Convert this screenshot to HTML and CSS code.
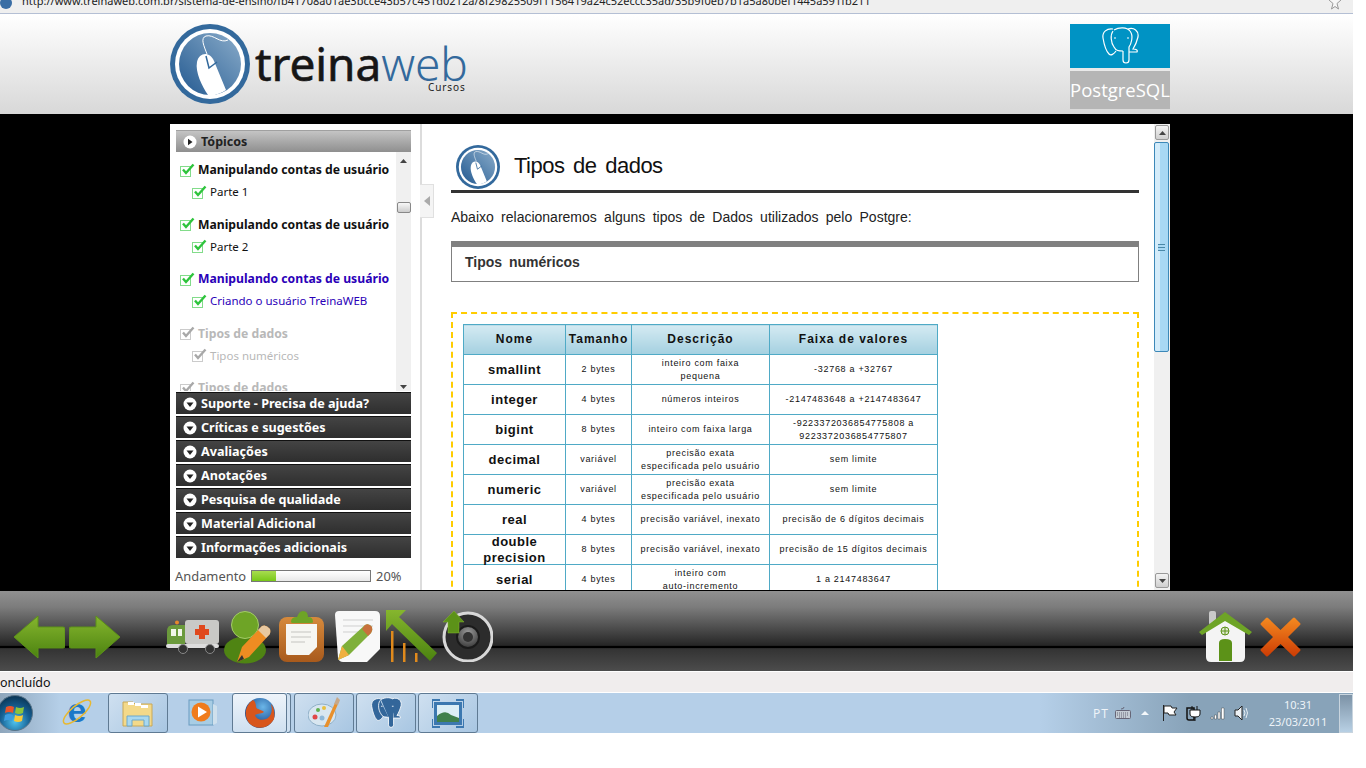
FILE: index.html
```html
<!DOCTYPE html>
<html lang="pt-BR">
<head>
    <meta charset="UTF-8">
    <title>TreinaWeb Cursos</title>
    <link rel="stylesheet" href="styles.css">
</head>
<body>
    <!-- shared icons -->
    <svg class="defs" width="0" height="0">
        <defs>
            <linearGradient id="discBlue" x1="0" y1="1" x2="1" y2="0">
                <stop offset="0" stop-color="#245a91"/>
                <stop offset="1" stop-color="#8aacca"/>
            </linearGradient>
            <linearGradient id="arrowGreen" x1="0" y1="0" x2="0" y2="1">
                <stop offset="0" stop-color="#86b62e"/>
                <stop offset="1" stop-color="#4b8210"/>
            </linearGradient>
            <linearGradient id="crossRed" x1="0" y1="0" x2="0" y2="1">
                <stop offset="0" stop-color="#f58a20"/>
                <stop offset="1" stop-color="#cc3c04"/>
            </linearGradient>
            <linearGradient id="boardBrown" x1="0" y1="0" x2="0" y2="1">
                <stop offset="0" stop-color="#d68a3c"/>
                <stop offset="1" stop-color="#a85a1c"/>
            </linearGradient>
            <radialGradient id="speakerCone" cx="0.5" cy="0.3" r="0.7">
                <stop offset="0" stop-color="#9a9a9a"/>
                <stop offset="1" stop-color="#3a3a3a"/>
            </radialGradient>
            <radialGradient id="orbBlue" cx="0.5" cy="0.75" r="0.7">
                <stop offset="0" stop-color="#4fc3ee"/>
                <stop offset="0.6" stop-color="#155f92"/>
                <stop offset="1" stop-color="#0c3a5c"/>
            </radialGradient>
            <radialGradient id="foxGlobe" cx="0.6" cy="0.3" r="0.6">
                <stop offset="0" stop-color="#6bb6e8"/>
                <stop offset="1" stop-color="#1c4f94"/>
            </radialGradient>
            <symbol id="logoMark" viewBox="0 0 80 80">
                <circle cx="40" cy="40" r="40" fill="#33699c"/>
                <circle cx="40" cy="40" r="35" fill="#fff"/>
                <circle cx="40" cy="40" r="31" fill="url(#discBlue)"/>
                <path d="M37 30C34 22 30 14 36 12C44 10 50 20 58 16" fill="none" stroke="#fff" stroke-width="1"/>
                <path d="M27 38C29 28 40 27 44 37L56 66C50 70 44 72 38 71C32 62 25 48 27 38Z" fill="#fff"/>
                <path d="M36 32L39 44L47 38" fill="none" stroke="#33699c" stroke-width="1.5"/>
            </symbol>
            <symbol id="pgElephant" viewBox="0 0 38 38">
                <path d="M12 2C6 1 1 5 2 11C3 17 5 24 8 27C10 29 13 27 15 24"/>
                <path d="M13 3C18 0 26 0 29 4C33 9 30 17 28 20L28 33C28 37 22 37 22 33L22 24"/>
                <path d="M27 2C33 0 38 4 37 10C36 14 34 19 32 22C35 22 37 23 36 25L28 25"/>
                <path d="M12 4C9 8 10 16 13 20C15 24 18 24 22 24"/>
                <path d="M13 11h2M26 11h2"/>
            </symbol>
            <symbol id="tick" viewBox="0 0 15 14">
                <rect x="0.5" y="3.5" width="10" height="10" fill="#fff" stroke="currentColor" stroke-opacity="0.6"/>
                <path d="M3 6.5L6 10L13.5 1.5" fill="none" stroke="currentColor" stroke-width="2.4"/>
            </symbol>
            <symbol id="openDown" viewBox="0 0 14 14">
                <circle cx="7" cy="7" r="6.5" fill="#fff"/>
                <path d="M3.5 5.5H10.5L7 10Z" fill="#222"/>
            </symbol>
        </defs>
    </svg>

    <div class="screen">
        <div class="urlbar">
            <svg class="url-globe" viewBox="0 0 14 14"><circle cx="6" cy="3" r="6" fill="#3a6ea5"/></svg>
            <span class="url-text">http://www.treinaweb.com.br/sistema-de-ensino/fb41708a01ae3bcce43b57c451d0212a/8f29825509f1156419a24c52eccc35ad/35b9f0eb7b1a5a80bef1445a591fb211</span>
            <svg class="url-star" viewBox="0 0 14 10"><path d="M1 0L5 3.5L3.5 9L7 6.5L10.5 9L9 3.5L13 0" fill="#f6f6f6" stroke="#999"/></svg>
        </div>

        <header class="site-head">
            <div class="brand">
                <svg class="brand-mark"><use href="#logoMark"/></svg>
                <div class="brand-name">
                    <div class="brand-word">treina<span class="brand-web">web</span></div>
                    <div class="brand-sub">Cursos</div>
                </div>
            </div>
            <div class="course-badge">
                <div class="course-logo">
                    <svg class="course-elephant"><use href="#pgElephant"/></svg>
                </div>
                <div class="course-name">PostgreSQL</div>
            </div>
        </header>

        <main class="stage">
            <div class="panel">
                <aside class="side">
                    <div class="topics-head">
                        <svg class="bullet" viewBox="0 0 14 14">
                            <circle cx="7" cy="7" r="6.5" fill="#fff"/>
                            <path d="M5 3.8L9.5 7L5 10.2Z" fill="#222"/>
                        </svg>
                        Tópicos
                    </div>
                    <div class="topics-wrap">
                        <div class="topics">
                            <div class="topic done">
                                <div class="topic-title"><svg class="tick"><use href="#tick"/></svg>Manipulando contas de usuário</div>
                                <div class="topic-part"><svg class="tick"><use href="#tick"/></svg>Parte 1</div>
                            </div>
                            <div class="topic done">
                                <div class="topic-title"><svg class="tick"><use href="#tick"/></svg>Manipulando contas de usuário</div>
                                <div class="topic-part"><svg class="tick"><use href="#tick"/></svg>Parte 2</div>
                            </div>
                            <div class="topic current">
                                <div class="topic-title"><svg class="tick"><use href="#tick"/></svg>Manipulando contas de usuário</div>
                                <div class="topic-part"><svg class="tick"><use href="#tick"/></svg>Criando o usuário TreinaWEB</div>
                            </div>
                            <div class="topic locked">
                                <div class="topic-title"><svg class="tick"><use href="#tick"/></svg>Tipos de dados</div>
                                <div class="topic-part"><svg class="tick"><use href="#tick"/></svg>Tipos numéricos</div>
                            </div>
                            <div class="topic locked">
                                <div class="topic-title"><svg class="tick"><use href="#tick"/></svg>Tipos de dados</div>
                            </div>
                        </div>
                        <div class="mini-scroll">
                            <svg class="mini-arrow" viewBox="0 0 9 5"><path d="M0 5L4.5 0L9 5Z" fill="#444"/></svg>
                            <div class="mini-thumb"></div>
                            <svg class="mini-arrow" viewBox="0 0 9 5"><path d="M0 0L4.5 5L9 0Z" fill="#444"/></svg>
                        </div>
                    </div>
                    <div class="acc"><svg class="bullet"><use href="#openDown"/></svg>Suporte - Precisa de ajuda?</div>
                    <div class="acc"><svg class="bullet"><use href="#openDown"/></svg>Críticas e sugestões</div>
                    <div class="acc"><svg class="bullet"><use href="#openDown"/></svg>Avaliações</div>
                    <div class="acc"><svg class="bullet"><use href="#openDown"/></svg>Anotações</div>
                    <div class="acc"><svg class="bullet"><use href="#openDown"/></svg>Pesquisa de qualidade</div>
                    <div class="acc"><svg class="bullet"><use href="#openDown"/></svg>Material Adicional</div>
                    <div class="acc"><svg class="bullet"><use href="#openDown"/></svg>Informações adicionais</div>
                    <div class="progress">
                        <span>Andamento</span>
                        <div class="progress-bar"><div class="progress-fill" style="width:20%"></div></div>
                        <span>20%</span>
                    </div>
                    <div class="collapse-tab">
                        <svg class="collapse-arrow" viewBox="0 0 6 10"><path d="M6 0V10L0 5Z" fill="#aaa"/></svg>
                    </div>
                </aside>

                <section class="lesson">
                    <div class="lesson-head">
                        <svg class="lesson-mark"><use href="#logoMark"/></svg>
                        <h1 class="lesson-title">Tipos de dados</h1>
                    </div>
                    <p class="lesson-intro">Abaixo relacionaremos alguns tipos de Dados utilizados pelo Postgre:</p>
                    <div class="subject">Tipos numéricos</div>
                    <div class="dashed">
                        <table class="types">
                            <thead>
                                <tr>
                                    <th class="col-name">Nome</th>
                                    <th class="col-size">Tamanho</th>
                                    <th class="col-desc">Descrição</th>
                                    <th class="col-range">Faixa de valores</th>
                                </tr>
                            </thead>
                            <tbody>
                                <tr><td class="type">smallint</td><td>2 bytes</td><td>inteiro com faixa<br>pequena</td><td>-32768 a +32767</td></tr>
                                <tr><td class="type">integer</td><td>4 bytes</td><td>números inteiros</td><td>-2147483648 a +2147483647</td></tr>
                                <tr><td class="type">bigint</td><td>8 bytes</td><td>inteiro com faixa larga</td><td>-9223372036854775808 a<br>9223372036854775807</td></tr>
                                <tr><td class="type">decimal</td><td>variável</td><td>precisão exata<br>especificada pelo usuário</td><td>sem limite</td></tr>
                                <tr><td class="type">numeric</td><td>variável</td><td>precisão exata<br>especificada pelo usuário</td><td>sem limite</td></tr>
                                <tr><td class="type">real</td><td>4 bytes</td><td>precisão variável, inexato</td><td>precisão de 6 dígitos decimais</td></tr>
                                <tr><td class="type"><span class="two-lines">double precision</span></td><td>8 bytes</td><td>precisão variável, inexato</td><td>precisão de 15 dígitos decimais</td></tr>
                                <tr><td class="type">serial</td><td>4 bytes</td><td>inteiro com<br>auto-incremento</td><td>1 a 2147483647</td></tr>
                            </tbody>
                        </table>
                    </div>
                </section>

                <div class="page-scroll">
                    <div class="page-btn"><svg class="page-arrow" viewBox="0 0 9 5"><path d="M0 5L4.5 0L9 5Z" fill="#444"/></svg></div>
                    <div class="page-thumb"><div class="page-grip"></div></div>
                    <div class="page-btn page-btn-down"><svg class="page-arrow" viewBox="0 0 9 5"><path d="M0 0L4.5 5L9 0Z" fill="#444"/></svg></div>
                </div>
            </div>
        </main>

        <nav class="toolbar">
            <svg class="tool t-arrow" viewBox="0 0 52 44"><path d="M25 1L1 22L25 43V33H50Q52 33 52 31V14Q52 12 50 12H25Z" fill="url(#arrowGreen)" stroke="#5c9218" stroke-linejoin="round"/></svg>
            <svg class="tool t-arrow t-next" viewBox="0 0 52 44"><path d="M27 1L51 22L27 43V33H2Q0 33 0 31V14Q0 12 2 12H27Z" fill="url(#arrowGreen)" stroke="#5c9218" stroke-linejoin="round"/></svg>
            <!-- ambulance -->
            <svg class="tool t-truck" viewBox="0 0 53 34">
                <circle cx="11" cy="2.500" r="2" fill="#e88a2c"/>
                <path d="M1 25V11Q1 5 7 5H19V27H3Q1 27 1 25Z" fill="#6b9a3c"/>
                <rect x="5" y="9" width="5" height="7" fill="#f2f6ea"/>
                <rect x="12" y="9" width="4" height="7" fill="#f2f6ea"/>
                <rect x="19" y="0" width="34" height="24" rx="3" fill="#c9c9c6"/>
                <path d="M33 5H39V9H43V15H39V19H33V15H29V9H33Z" fill="#e0481c"/>
                <rect x="0" y="24" width="53" height="4" rx="2" fill="#ddd"/>
                <circle cx="17" cy="29" r="4.500" fill="#333" stroke="#888"/>
                <circle cx="44" cy="29" r="4.500" fill="#333" stroke="#888"/>
            </svg>
            <!-- user + pencil -->
            <svg class="tool t-user" viewBox="0 0 47 53">
                <ellipse cx="21" cy="39" rx="21" ry="13.500" fill="#4f8413"/>
                <circle cx="21" cy="14" r="13.500" fill="#6ea426" stroke="#a4cc68"/>
                <path d="M13 51L18 36L38 15Q42 13 46 18Q47 22 45 24L25 46Z" fill="#ee8c22"/>
                <path d="M38 15Q42 13 46 18Q47 22 45 24L42 27L34 19Z" fill="#e8c8a0"/>
                <path d="M13 51L18 44L20 48Z" fill="#333"/>
            </svg>
            <!-- clipboard -->
            <svg class="tool t-board" viewBox="0 0 45 52">
                <rect x="0" y="7" width="45" height="45" rx="8" fill="url(#boardBrown)"/>
                <path d="M7 14H38V37L30 45H9Q7 45 7 43Z" fill="#f6f6f2"/>
                <path d="M12 22H32M12 27H32M12 32H26" stroke="#c4c4c0"/>
                <path d="M12 12Q12 7 18 7Q20 1 24 1Q29 1 29 7Q34 7 34 12Q34 13 32 13H14Q12 13 12 12Z" fill="#6ea426"/>
            </svg>
            <!-- notes + pencil -->
            <svg class="tool t-note" viewBox="0 0 46 51">
                <path d="M4 0H40Q45 0 45 5V38L32 51H8Q4 51 3 47L0 4Q0 0 4 0Z" fill="#f8f8f8"/>
                <path d="M8 9H38M8 15H38M8 21H30" stroke="#cfcfcf"/>
                <path d="M3 49L7 35L30 14Q34 12 37 16Q38 19 36 22L14 44Z" fill="#7fb03a"/>
                <path d="M30 14Q34 12 37 16Q38 19 36 22L33 25L27 18Z" fill="#c8703c"/>
                <path d="M3 49L7 35L14 44Z" fill="#f0b040"/>
            </svg>
            <!-- ranking -->
            <svg class="tool t-rank" viewBox="0 0 52 52">
                <path d="M0 0H20L13 7L51 43L44 51L6 14L0 21Z" fill="url(#arrowGreen)"/>
                <path d="M5 21H7.500V52H5ZM17 33H19.500V52H17ZM29 43H31.500V52H29Z" fill="#e08a1c"/>
            </svg>
            <!-- speaker -->
            <svg class="tool t-sound" viewBox="0 0 51 52">
                <circle cx="26" cy="27" r="24" fill="#2c2c2c" stroke="#d8d8d8" stroke-width="3"/>
                <circle cx="26" cy="27" r="11" fill="url(#speakerCone)" stroke="#1a1a1a" stroke-width="2"/>
                <circle cx="26" cy="27" r="5" fill="#333"/>
                <path d="M12 1L22 12H17V23H6V12H1Z" fill="#5c9218" stroke="#86b62e" stroke-width="0.500"/>
            </svg>
            <div class="tool-gap"></div>
            <!-- home -->
            <svg class="tool t-home" viewBox="0 0 53 51">
                <rect x="10" y="0" width="7" height="14" rx="2" fill="#c9c9c9"/>
                <path d="M7 19L26 5L46 19V46Q46 51 41 51H12Q7 51 7 46Z" fill="#f4f4f4"/>
                <path d="M0 21L26 1L53 21L50 24L26 10L3 24Z" fill="#6ea426"/>
                <circle cx="26" cy="20" r="4" fill="#dfe8d0" stroke="#5c9218"/>
                <path d="M26 16V24M22 20H30" stroke="#5c9218"/>
                <path d="M20 50V32Q20 28 26 28Q33 28 33 32V50Z" fill="#5c9218"/>
            </svg>
            <!-- close -->
            <svg class="tool t-close" viewBox="0 0 41 40">
                <path d="M8 1L20.500 13L33 1Q34 0 35 1L40 6Q41 7 40 8L28 20L40 32Q41 33 40 34L35 39Q34 40 33 39L20.500 27L8 39Q7 40 6 39L1 34Q0 33 1 32L13 20L1 8Q0 7 1 6L6 1Q7 0 8 1Z" fill="url(#crossRed)"/>
            </svg>
        </nav>

        <div class="status">Concluído</div>

        <footer class="taskbar">
            <svg class="orb" viewBox="0 0 36 36">
                <circle cx="18" cy="18" r="17.500" fill="url(#orbBlue)" stroke="#5a7488"/>
                <path d="M9 12Q13 10 17 12L16 18Q12 16 8 18Z" fill="#e8542c"/>
                <path d="M19 12Q23 14 27 12L26 18Q22 20 18 18Z" fill="#8cc43c"/>
                <path d="M8 20Q12 18 16 20L15 26Q11 24 7 26Z" fill="#3c9ce0"/>
                <path d="M18 20Q22 22 26 20L25 26Q21 28 17 26Z" fill="#f8c838"/>
            </svg>
            <div class="task plain">
                <svg class="task-icon" viewBox="0 0 32 32">
                    <text class="ie-letter" x="16" y="25" text-anchor="middle">e</text>
                    <ellipse cx="16" cy="15" rx="17" ry="6" transform="rotate(-40 16 15)" fill="none" stroke="#e8b830" stroke-width="1.500"/>
                </svg>
            </div>
            <div class="task framed">
                <svg class="task-icon" viewBox="0 0 32 32">
                    <path d="M1 29V5H11L13 7H30V29Z" fill="#f3d98a" stroke="#c8a858"/>
                    <path d="M6 5H12V8H6ZM13 6H19V9H13ZM19 8H26V11H19Z" fill="#fff"/>
                    <path d="M5 29V19H27V29H22V23H10V29Z" fill="#a8d8f0" stroke="#6ca8cc"/>
                </svg>
            </div>
            <div class="task plain media-task">
                <svg class="task-icon" viewBox="0 0 32 32">
                    <rect x="3" y="3" width="24" height="25" fill="#a8cde4" stroke="#6a9cc0"/>
                    <path d="M27 7L31 9V26L27 28" fill="#cfe0ec"/>
                    <circle cx="15" cy="15" r="9.500" fill="#f07c1c"/>
                    <path d="M12 9.500L21 15L12 20.500Z" fill="#fff"/>
                </svg>
            </div>
            <div class="task framed active">
                <svg class="task-icon" viewBox="0 0 32 32">
                    <circle cx="16" cy="16" r="15" fill="url(#foxGlobe)"/>
                    <path d="M9 3C1 8 -1 20 6 27C13 33 25 32 30 22C31 16 30 10 27 7C29 14 27 20 22 22C17 24 12 22 11 18C14 16 18 17 20 15C17 12 13 13 12 10C12 7 11 4 9 3Z" fill="#d8561c"/>
                </svg>
            </div>
            <div class="task-sliver"></div>
            <div class="task framed">
                <svg class="task-icon" viewBox="0 0 32 32">
                    <ellipse cx="14" cy="18" rx="14" ry="11" fill="#d8e6f0" stroke="#8fb0c8"/>
                    <circle cx="7" cy="20" r="2.500" fill="#e04848"/>
                    <circle cx="10" cy="13" r="2" fill="#60b050"/>
                    <circle cx="16" cy="11" r="2" fill="#e8c040"/>
                    <circle cx="14" cy="21" r="2.500" fill="#8fb8d8"/>
                    <path d="M16 30L27 6L30 7L20 30Z" fill="#e8902c"/>
                    <path d="M26 7L29 0L32 3L30 8Z" fill="#c8a888"/>
                </svg>
            </div>
            <div class="task framed next">
                <svg class="task-icon task-pg"><use href="#pgElephant"/></svg>
            </div>
            <div class="task framed next">
                <svg class="task-icon" viewBox="0 0 32 32">
                    <rect x="2" y="5" width="28" height="23" fill="#3c78b0"/>
                    <rect x="5" y="8" width="22" height="17" fill="#dceef6"/>
                    <path d="M5 19Q13 12 19 18L27 21V25H5Z" fill="#40804c"/>
                    <path d="M8 3H0V11M24 3H32V11M0 22V30H8M32 22V30H24" fill="none" stroke="#3c78b0" stroke-width="2"/>
                </svg>
            </div>
            <div class="tray">
                <span class="tray-lang">PT</span>
                <svg class="tray-kbd" viewBox="0 0 16 12">
                    <path d="M9 0Q9 2 6 2" fill="none" stroke="#667"/>
                    <rect x="0.500" y="3.500" width="15" height="8" rx="1" fill="#c4ccd4" stroke="#667"/>
                    <path d="M2 6H14M2 8H14M4 10H12" stroke="#667" stroke-dasharray="1 1"/>
                </svg>
                <svg class="tray-up" viewBox="0 0 8 4"><path d="M0 4L4 0L8 4Z" fill="#f4f8fb"/></svg>
                <svg class="tray-icon" viewBox="0 0 16 16">
                    <path d="M1.500 0V16M2 1H9L10 3H15L12 7L14 10H7L6 8H2Z" fill="#fff" stroke="#222"/>
                </svg>
                <svg class="tray-icon" viewBox="0 0 16 16">
                    <path d="M1 3H8V15H3Q1 15 1 13Z" fill="none" stroke="#111" stroke-width="1.500"/>
                    <path d="M6 1V5M11 1V5M4 5H14V9Q14 12 9 12Q4 12 4 9ZM9 12V16" fill="#fff" stroke="#111"/>
                </svg>
                <svg class="tray-icon" viewBox="0 0 16 16">
                    <path d="M1 12h2v2H1ZM4.500 10h2v4h-2ZM8 7h2v7H8ZM11.500 3h2.500v11h-2.500Z" fill="#fff" stroke="#333" stroke-width="0.400"/>
                </svg>
                <svg class="tray-icon" viewBox="0 0 16 16">
                    <path d="M1 5H4L8 1V15L4 11H1Z" fill="#eef2f6" stroke="#222"/>
                    <path d="M10 5Q12 8 10 11M12 3Q15 8 12 13" fill="none" stroke="#e8eef4"/>
                </svg>
                <div class="clock">
                    <div>10:31</div>
                    <div>23/03/2011</div>
                </div>
                <div class="show-desktop"></div>
            </div>
        </footer>
    </div>
</body>
</html>
```

FILE: styles.css
```css
html, body {
    margin: 0;
    padding: 0;
    background: #fff;
    overflow: hidden;
}
.defs {
    position: absolute;
}
.screen {
    width: 1353px;
    height: 733px;
    display: flex;
    flex-direction: column;
    font-family: "Noto Sans", sans-serif;
}

/* browser address bar, cut off by the top of the shot */
.urlbar {
    height: 13px;
    flex: none;
    display: flex;
    background: #efefef;
    border-bottom: 1px solid #b4bfd4;
    overflow: hidden;
    padding-right: 11px;
}
.url-globe {
    width: 14px;
    height: 14px;
    flex: none;
    margin-right: 8px;
}
.url-text {
    font-size: 11px;
    line-height: 14px;
    margin-top: -6px;
    color: #222;
    white-space: nowrap;
}
.url-star {
    width: 14px;
    height: 10px;
    margin-left: auto;
    flex: none;
}

/* site header */
.site-head {
    height: 100px;
    flex: none;
    box-sizing: border-box;
    padding: 10px 183px 0 170px;
    display: flex;
    justify-content: space-between;
    background: linear-gradient(#fff, #d8d8d8);
}
.brand {
    display: flex;
    height: 80px;
}
.brand-mark {
    width: 80px;
    height: 80px;
    margin-right: 5px;
}
.brand-name {
    display: flex;
    flex-direction: column;
    align-items: flex-end;
    padding-top: 20px;
}
.brand-word {
    font-size: 46px;
    line-height: 38px;
    color: #161616;
    letter-spacing: -0.1px;
    -webkit-text-stroke: 0.6px #161616;
}
.brand-web {
    color: #33699c;
    font-weight: 300;
    -webkit-text-stroke: 0;
}
.brand-sub {
    font-size: 10px;
    line-height: 10px;
    letter-spacing: 0.9px;
    margin-right: 2px;
    color: #222;
}
.course-badge {
    width: 100px;
}
.course-logo {
    height: 44px;
    background: #0093c4;
    display: flex;
    justify-content: center;
    align-items: center;
}
.course-elephant {
    width: 38px;
    height: 38px;
    fill: none;
    stroke: #fff;
    stroke-width: 1.2;
}
.course-name {
    height: 38px;
    margin-top: 3px;
    background: #b5b5b5;
    color: #fff;
    font-family: "Open Sans", sans-serif;
    font-size: 18.5px;
    line-height: 38px;
    text-align: center;
    white-space: nowrap;
    overflow: hidden;
}

/* black stage */
.stage {
    height: 476px;
    flex: none;
    box-sizing: border-box;
    padding: 10px 0 0 170px;
    background: #000;
    display: flex;
}
.panel {
    width: 1000px;
    height: 466px;
    background: #fff;
    display: flex;
    overflow: hidden;
}

/* left column */
.side {
    position: relative;
    width: 250px;
    flex: none;
    box-sizing: content-box;
    border-right: 2px solid #dcdcdc;
    padding-top: 6px;
}
.topics-head {
    margin: 0 9px 0 6px;
    height: 22px;
    box-sizing: border-box;
    border-top: 1px solid #a0a0a0;
    background: linear-gradient(#c4c4c4, #8f8f8f);
    display: flex;
    align-items: center;
    font-size: 12.5px;
    font-weight: 700;
    color: #222;
}
.bullet {
    width: 14px;
    height: 14px;
    flex: none;
    margin: 0 4px 0 7px;
}
.topics-wrap {
    margin: 0 9px 1px 6px;
    height: 239px;
    display: flex;
    overflow: hidden;
}
.topics {
    flex: 1;
    padding: 6px 0 0 4px;
}
.topic {
    height: 54.500px;
}
.topic-title {
    display: flex;
    align-items: center;
    height: 23px;
    font-size: 12.2px;
    font-weight: 700;
    white-space: nowrap;
}
.topic-part {
    display: flex;
    align-items: center;
    height: 21px;
    padding-left: 12px;
    font-size: 11.500px;
}
.tick {
    width: 15px;
    height: 14px;
    flex: none;
    margin-right: 3px;
}
.done {
    color: #111;
}
.current {
    color: #2a00b8;
}
.done .tick,
.current .tick {
    color: #2ec43c;
}
.locked {
    color: #b8b8b8;
}
.locked .tick {
    color: #a8a8a8;
}
.mini-scroll {
    width: 15px;
    flex: none;
    background: #f0f0f0;
    display: flex;
    flex-direction: column;
    align-items: center;
}
.mini-arrow {
    width: 7px;
    height: 4px;
    margin-top: 7px;
}
.mini-thumb {
    width: 14px;
    height: 11px;
    margin-top: 39px;
    margin-bottom: 165px;
    box-sizing: border-box;
    border: 1px solid #888;
    border-radius: 2px;
    background: linear-gradient(#f8f8f8, #ccc);
}
.acc {
    margin: 0 9px 2px 6px;
    height: 22px;
    box-sizing: border-box;
    border-top: 1px solid #111;
    background: linear-gradient(#444, #2e2e2e);
    display: flex;
    align-items: center;
    font-size: 12.6px;
    font-weight: 700;
    color: #fff;
    white-space: nowrap;
}
.progress {
    display: flex;
    align-items: center;
    margin: 7px 0 0 5px;
    height: 22px;
    font-size: 12.9px;
    color: #555;
}
.progress-bar {
    width: 118px;
    height: 10px;
    margin: 0 5px;
    border: 1px solid #777;
    background: linear-gradient(#fff, #e8e8e8);
}
.progress-fill {
    height: 100%;
    background: linear-gradient(#a8dc50, #78c818);
}
.collapse-tab {
    position: absolute;
    left: 250px;
    top: 60px;
    width: 13px;
    height: 32px;
    background: #f4f4f4;
    border: 1px solid #e0e0e0;
    border-left: 0;
    display: flex;
    align-items: center;
    justify-content: center;
}
.collapse-arrow {
    width: 6px;
    height: 10px;
}

/* lesson */
.lesson {
    flex: 1;
    min-width: 0;
    padding: 19px 15px 0 29px;
    font-family: "Liberation Sans", sans-serif;
}
.lesson-head {
    display: flex;
    align-items: center;
    height: 47px;
    border-bottom: 3px solid #333;
}
.lesson-mark {
    width: 44px;
    height: 44px;
    margin-left: 5px;
    margin-right: 14px;
}
.lesson-title {
    margin: -2px 0 0;
    font-size: 22px;
    font-weight: 400;
    letter-spacing: -0.5px;
    word-spacing: 3px;
    color: #111;
}
.lesson-intro {
    margin: 14px 0;
    font-size: 14px;
    line-height: 20px;
    word-spacing: 3.4px;
    color: #222;
}
.subject {
    height: 34px;
    border: 1px solid #808080;
    border-top-width: 6px;
    padding-left: 13px;
    font-size: 14px;
    font-weight: 700;
    line-height: 30px;
    word-spacing: 3px;
    color: #333;
}
.dashed {
    margin-top: 30px;
    padding: 10px;
    border: 2px dashed #ffcc00;
    height: 400px;
}
.types {
    width: 475px;
    table-layout: fixed;
    border-collapse: collapse;
    font-size: 9px;
    letter-spacing: 0.7px;
    color: #111;
    text-align: center;
}
.types th,
.types td {
    height: 29px;
    padding: 0;
    border: 1px solid #4faac6;
    line-height: 13px;
}
.types th {
    font-size: 12px;
    letter-spacing: 1px;
    background: linear-gradient(#d4eaf2, #a4d0e0);
}
.types td.type {
    font-size: 13px;
    font-weight: 700;
    line-height: 16px;
    letter-spacing: 0.5px;
}
.two-lines {
    display: block;
    margin: -2px 0;
}
.col-name {
    width: 101px;
}
.col-size {
    width: 65px;
}
.col-desc {
    width: 137px;
}

/* big scrollbar */
.page-scroll {
    width: 16px;
    flex: none;
    background: #f0f0f0;
    display: flex;
    flex-direction: column;
    padding-top: 1px;
}
.page-btn {
    height: 15px;
    margin: 0 1px;
    box-sizing: border-box;
    border: 1px solid #999;
    border-radius: 2px;
    background: linear-gradient(#f4f4f4, #cfcfcf);
    display: flex;
    align-items: center;
    justify-content: center;
}
.page-btn-down {
    margin-top: auto;
    margin-bottom: 2px;
}
.page-arrow {
    width: 7px;
    height: 4px;
}
.page-thumb {
    height: 210px;
    margin: 2px 1px 0 0;
    box-sizing: border-box;
    border: 1px solid #3c88b8;
    border-radius: 2px;
    background: linear-gradient(to right, #d4ecfa, #d4ecfa 40%, #a8d8f4 40%, #a8d8f4);
    display: flex;
    align-items: center;
    justify-content: center;
}
.page-grip {
    width: 7px;
    height: 7px;
    background: repeating-linear-gradient(#4a88a8, #4a88a8 1px, #a8d8f4 1px, #a8d8f4 3px);
}

/* lower app toolbar */
.toolbar {
    height: 81px;
    flex: none;
    box-sizing: border-box;
    border-top: 1px solid #000;
    padding: 10px 52px 0 13px;
    display: flex;
    align-items: center;
    background: linear-gradient(#909090 0, #7c7c7c 20%, #262626 68%, #000 69%, #000 71%, #333 72%, #4c4c4c 100%);
}
.tool {
    flex: none;
}
.tool-gap {
    flex: 1;
}
.t-arrow {
    width: 52px;
    height: 44px;
    margin-top: 2px;
}
.t-next {
    margin-left: 4px;
}
.t-truck {
    width: 53px;
    height: 34px;
    margin-left: 45px;
    margin-top: 2px;
}
.t-user {
    width: 47px;
    height: 53px;
    margin-left: 5px;
    margin-top: 2px;
}
.t-board {
    width: 45px;
    height: 52px;
    margin-left: 8px;
}
.t-note {
    width: 46px;
    height: 51px;
    margin-left: 11px;
}
.t-rank {
    width: 52px;
    height: 52px;
    margin-left: 5px;
}
.t-sound {
    width: 51px;
    height: 52px;
    margin-left: 4px;
}
.t-home {
    width: 53px;
    height: 51px;
}
.t-close {
    width: 41px;
    height: 40px;
    margin-left: 8px;
    margin-top: 2px;
}

/* status bar */
.status {
    height: 20px;
    flex: none;
    margin: 1px 0;
    background: #f0eded;
    font-size: 12.5px;
    line-height: 21px;
    color: #111;
    text-indent: -8px;
    overflow: hidden;
    box-shadow: 0 -1px 0 #fff;
}

/* windows taskbar */
.taskbar {
    flex: 1;
    display: flex;
    align-items: stretch;
    background: linear-gradient(to right, #8ea6bc 0, #b5cfe8 60px, #b5cfe8 1040px, #88a3b9 1190px);
    overflow: hidden;
}
.orb {
    width: 36px;
    height: 36px;
    flex: none;
    margin: 2px 14px 0 -3px;
}
.task {
    width: 60px;
    box-sizing: border-box;
    flex: none;
    display: flex;
    align-items: center;
    justify-content: center;
}
.framed {
    border: 1px solid #5f7a93;
    border-radius: 3px;
    background: linear-gradient(135deg, #cfe0f0, #a8c6e2);
}
.plain + .framed {
    margin-left: 1px;
}
.media-task {
    margin-left: 4px;
}
.plain + .active {
    width: 55px;
    margin-left: 0;
    background: linear-gradient(#eef4fa, #cfe0f0);
}
.task-sliver {
    width: 4px;
    flex: none;
    margin-right: 3px;
    box-sizing: border-box;
    border: 1px solid #5f7a93;
    border-left: 0;
    border-radius: 0 3px 3px 0;
    background: #cfe0f0;
}
.next {
    margin-left: 2px;
}
.task-icon {
    width: 32px;
    height: 32px;
}
.ie-letter {
    font-family: "Liberation Sans", sans-serif;
    font-size: 34px;
    font-weight: 700;
    fill: #1c78c8;
}
.task-pg {
    fill: #33669a;
    stroke: #fff;
    stroke-width: 1;
}
.tray {
    margin-left: auto;
    display: flex;
    align-items: center;
    color: #eef3f8;
}
.tray-lang {
    font-size: 12px;
    margin-right: 6px;
    letter-spacing: 1px;
}
.tray-kbd {
    width: 16px;
    height: 12px;
    margin-right: 10px;
}
.tray-up {
    width: 8px;
    height: 4px;
    margin-right: 13px;
}
.tray-icon {
    width: 16px;
    height: 16px;
    margin-right: 8px;
}
.clock {
    width: 72px;
    margin: 0 5px 0 4px;
    text-align: center;
    font-size: 11px;
    line-height: 17px;
}
.show-desktop {
    width: 14px;
    height: 39px;
    box-sizing: border-box;
    border: 1px solid #c8d4de;
    background: linear-gradient(#7c92a6, #b8d0e4);
}
```
